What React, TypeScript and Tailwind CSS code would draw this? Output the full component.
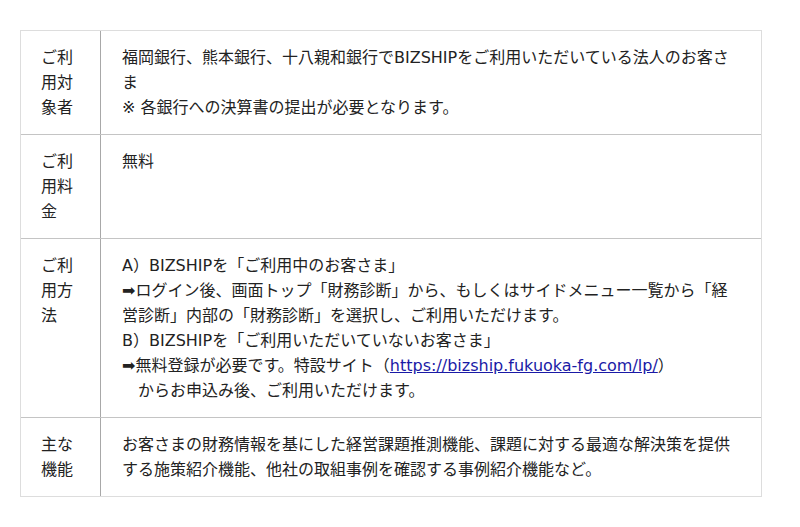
import React from "react";

const font = { fontFamily: '"DejaVu Sans", "Noto Sans CJK JP", sans-serif' };

function Row({ label, children, first }: { label: string; children: React.ReactNode; first?: boolean }) {
  return (
    <div className={first ? "flex" : "flex border-t border-[#c4c4c4]"}>
      <div className="w-[80px] shrink-0 border-r border-[#a8a8a8] pl-[20px] pr-[19px] py-[14px] break-all">
        {label}
      </div>
      <div className="flex-1 min-w-0 pl-[21px] pr-[21px] py-[14px]">{children}</div>
    </div>
  );
}

export default function App() {
  return (
    <div className="bg-white w-[800px] h-[527px] pt-[30px] pl-[20px]" style={font}>
      <div className="w-[742px] border border-[#dddddd] text-[16px] leading-[25px] text-[#222]">
        <Row label="ご利用対象者" first>
          <p>
            福岡銀行、熊本銀行、十八親和銀行でBIZSHIPをご利用いただいている法人のお客さ
            <br />ま
          </p>
          <p>※ 各銀行への決算書の提出が必要となります。</p>
        </Row>
        <Row label="ご利用料金">
          <p>無料</p>
        </Row>
        <Row label="ご利用方法">
          <p>A）BIZSHIPを「ご利用中のお客さま」</p>
          <p>➡ログイン後、画面トップ「財務診断」から、もしくはサイドメニュー一覧から「経営診断」内部の「財務診断」を選択し、ご利用いただけます。</p>
          <p>B）BIZSHIPを「ご利用いただいていないお客さま」</p>
          <p>
            ➡無料登録が必要です。特設サイト（
            <a className="text-[#1a1aa6] underline" href="#">
              https://bizship.fukuoka-fg.com/lp/
            </a>
            ）
          </p>
          <p>　からお申込み後、ご利用いただけます。</p>
        </Row>
        <Row label="主な機能">
          <p>お客さまの財務情報を基にした経営課題推測機能、課題に対する最適な解決策を提供する施策紹介機能、他社の取組事例を確認する事例紹介機能など。</p>
        </Row>
      </div>
    </div>
  );
}
